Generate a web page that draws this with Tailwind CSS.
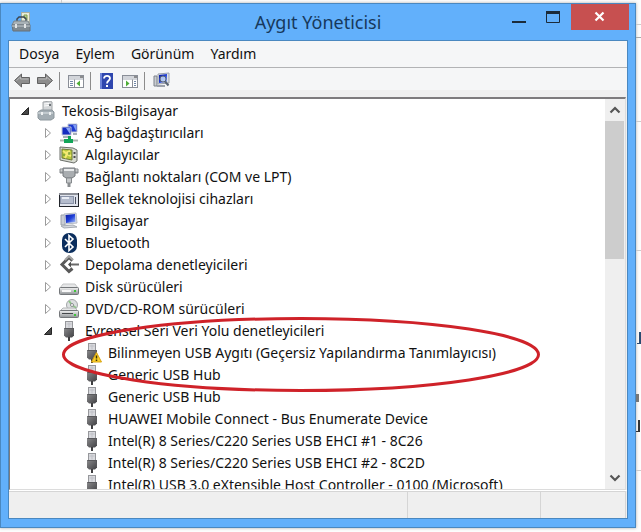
<!DOCTYPE html>
<html lang="tr">

<head>
    <meta charset="UTF-8">
    <meta name="viewport" content="width=device-width, initial-scale=1.0">
    <script src="https://cdn.jsdelivr.net/npm/@tailwindcss/browser@4"></script>
    <title>Aygıt Yöneticisi</title>
</head>

<body class="relative h-screen overflow-hidden flex flex-col bg-[#fdfdfd] pt-[3px] pr-[5px] pb-1 font-['Noto_Sans','Open_Sans',sans-serif] text-sm text-[#111]">

    <!-- Icons used more than once -->
    <svg class="absolute w-0 h-0">
        <defs>
            <linearGradient id="usb-body" x1="0" x2="1" y1="0" y2="1">
                <stop offset="0" stop-color="#8a8a8c"/>
                <stop offset="1" stop-color="#404043"/>
            </linearGradient>
            <linearGradient id="metal" x1="0" x2="0" y1="0" y2="1">
                <stop offset="0" stop-color="#f2f2f2"/>
                <stop offset="1" stop-color="#8f9396"/>
            </linearGradient>
            <linearGradient id="screen" x1="0" x2="1" y1="0" y2="1">
                <stop offset="0" stop-color="#0a1a9c"/>
                <stop offset="0.5" stop-color="#1f3fd8"/>
                <stop offset="1" stop-color="#a9c4fa"/>
            </linearGradient>
        </defs>
        <symbol id="usb" viewBox="0 0 20 20">
            <rect x="6.5" y="0.500" width="7" height="7" fill="#d9dade" stroke="#97989c"/>
            <path d="M7.500 3h5M10 1.500v5" stroke="#bfc0c6"/>
            <path d="M5 7h10v7.500l-2 2H7l-2-2z" fill="url(#usb-body)"/>
            <path d="M5.500 7.500h9v6.500" fill="none" stroke="#59595c"/>
            <rect x="9" y="16" width="2" height="4" fill="#3e3e40"/>
        </symbol>
        <symbol id="closed" viewBox="0 0 10 12">
            <path d="M2.500 1.500v9l5-4.500z" fill="#fff" stroke="#9b9b9b"/>
        </symbol>
        <symbol id="open" viewBox="0 0 10 12">
            <path d="M8.500 2.500v7h-7z" fill="#484848" stroke="#262626"/>
        </symbol>
    </svg>

    <!-- Page behind the window -->
    <div class="absolute top-0 left-[61px] w-px h-[3px] bg-[#ccc]"></div>
    <div class="absolute top-0 right-0 w-[5px] h-full overflow-hidden">
        <div class="absolute top-6 w-full h-px bg-[#ccc]"></div>
        <div class="absolute top-[37px] w-full h-px bg-[#aaa]"></div>
        <div class="absolute top-[121px] w-full h-px bg-[#ccc]"></div>
        <div class="absolute top-[250px] w-full h-px bg-[#ccc]"></div>
        <div class="absolute top-[332px] right-0 w-1 h-3 border-r-2 border-b border-[#2b4a70]"></div>
        <div class="absolute top-[394px] left-0 w-[3px] h-2 bg-[#777]"></div>
        <div class="absolute top-[420px] left-0 w-1 h-3 border-r-2 border-b border-[#333]"></div>
        <div class="absolute top-[470px] w-full h-px bg-[#ccc]"></div>
    </div>

    <main class="flex-1 min-h-0 flex flex-col bg-[#62b0fb] border border-[#4a88c0] shadow-[0_0_3px_#aaa]">

        <header class="relative h-9 shrink-0 flex items-center justify-center">
            <svg class="absolute left-2.5 top-2 w-5 h-5" viewBox="0 0 20 20">
                <rect x="10.500" y="0.500" width="8" height="11" fill="#e9ecd9" stroke="#a9aea0"/>
                <path d="M13 3h3v3h-3zM15 7h2" fill="#b9cf8e" stroke="#83a055"/>
                <path d="M6 10V7l2-2h5l2 2v3" fill="none" stroke="#3d4650" stroke-width="1.500"/>
                <path d="M3 9h14l2 4H1z" fill="#a9b2b7" stroke="#7a848a"/>
                <path d="M1 13h18v6H2z" fill="#7f8a91" stroke="#667178"/>
                <path d="M1 14h18" stroke="#c8ced2"/>
                <path d="M5 12v4M14 12v4" stroke="#e0e4e6" stroke-width="2"/>
            </svg>
            <h1 class="text-lg text-[#17395c]">Aygıt Yöneticisi</h1>
            <div class="absolute right-1.5 top-0 flex h-[26px]">
                <button class="w-10 flex justify-center" aria-label="Simge durumuna küçült">
                    <svg class="w-4 h-[26px]" viewBox="0 0 16 26"><path d="M1 18h14" stroke="#1b2b3a" stroke-width="2"/></svg>
                </button>
                <button class="w-7 flex justify-center" aria-label="Ekranı kapla">
                    <svg class="w-4 h-[26px]" viewBox="0 0 16 26"><path d="M1.500 8v10.500h13V8" fill="none" stroke="#1b2b3a"/><path d="M1 8.500h14" stroke="#1b2b3a" stroke-width="3"/></svg>
                </button>
                <button class="ml-1 w-[58px] flex justify-center bg-[#c75050]" aria-label="Kapat">
                    <svg class="w-3 h-[26px]" viewBox="0 0 12 26"><path d="M1.500 8.500l8 8M9.500 8.500l-8 8" stroke="#fff" stroke-width="2.200"/></svg>
                </button>
            </div>
        </header>

        <div class="flex-1 min-h-0 mx-[7px] mb-2 flex flex-col bg-[#efefef] border border-[#4a88c0]">

            <nav class="h-[27px] shrink-0 flex items-center gap-4 px-2.5 bg-[#f5f6f7] border-b border-[#b2b3b5]">
                <button>Dosya</button>
                <button>Eylem</button>
                <button>Görünüm</button>
                <button>Yardım</button>
            </nav>

            <div class="h-[22px] shrink-0 flex items-center pl-1 pt-1 bg-[#f5f6f7]">
                <button aria-label="Geri">
                    <svg class="w-[18px] h-[18px]" viewBox="0 0 18 18"><path d="M1.500 8.500l7-6.500v3.500h8v6h-8V15z" fill="#8d8d8d" stroke="#626262"/><path d="M3.500 8.500l4-3.500v2h8" fill="none" stroke="#b8b8b8"/></svg>
                </button>
                <button class="ml-[5px]" aria-label="İleri">
                    <svg class="w-[18px] h-[18px]" viewBox="0 0 18 18"><path d="M16.500 8.500l-7-6.500v3.500h-8v6h8V15z" fill="#8d8d8d" stroke="#626262"/><path d="M14.500 8.500l-4-3.500v2h-8" fill="none" stroke="#b8b8b8"/></svg>
                </button>
                <div class="ml-[5px] w-px h-[18px] bg-[#8c8c8c]"></div>
                <button class="ml-2" aria-label="Konsol ağacını göster">
                    <svg class="w-4 h-4" viewBox="0 0 16 16">
                        <rect x="0.500" y="2.500" width="15" height="12" fill="#fff" stroke="#8a8f98"/>
                        <path d="M1 4h14M1 6h14" stroke="#a5abb5"/>
                        <path d="M12 4h3" stroke="#444"/>
                        <path d="M6.500 6.500v8" stroke="#8a8f98"/>
                        <path d="M2 8.500h3M2 10.500h3M2 12.500h3" stroke="#7188a8"/>
                        <path d="M12 7.500v6L8.500 10.500z" fill="#4fae38"/>
                    </svg>
                </button>
                <div class="ml-1.5 w-px h-[18px] bg-[#8c8c8c]"></div>
                <button class="ml-[9px]" aria-label="Yardım">
                    <svg class="w-[13px] h-4" viewBox="0 0 13 16">
                        <rect width="13" height="16" fill="#2e46ae"/>
                        <path d="M1 0v16" stroke="#6d83d8" stroke-width="2"/>
                        <path d="M4 5.500C4 2 10 2 10 5.500C10 7.500 7 7.500 7 10.500" fill="none" stroke="#fff" stroke-width="1.800"/>
                        <rect x="6" y="12" width="2" height="2" fill="#fff"/>
                    </svg>
                </button>
                <button class="ml-[9px]" aria-label="Eylem bölmesini göster">
                    <svg class="w-4 h-4" viewBox="0 0 16 16">
                        <rect x="0.500" y="2.500" width="15" height="12" fill="#fff" stroke="#8a8f98"/>
                        <path d="M1 4h14M1 6h14" stroke="#a5abb5"/>
                        <path d="M12 4h3" stroke="#444"/>
                        <path d="M10.500 6.500v8" stroke="#8a8f98"/>
                        <path d="M12 8.500h2M12 10.500h2M12 12.500h2" stroke="#7188a8"/>
                        <path d="M4 7.500v6l3.500-3z" fill="#4fae38"/>
                    </svg>
                </button>
                <div class="ml-1.5 w-px h-[18px] bg-[#8c8c8c]"></div>
                <button class="ml-2" aria-label="Donanım değişikliklerini tara">
                    <svg class="w-[17px] h-[18px]" viewBox="0 0 17 18">
                        <path d="M1 4h3v10H1z" fill="#c9cdd2" stroke="#7c828a"/>
                        <path d="M5 2l11-1v10l-11 1z" fill="#dfe3ea" stroke="#9ba1ab"/>
                        <path d="M6 3l8-1v8l-8 1z" fill="url(#screen)"/>
                        <circle cx="10" cy="7" r="3" fill="#cfe4fb" fill-opacity="0.800" stroke="#5b6675"/>
                        <path d="M12 9.500l3.500 4" stroke="#5b6675" stroke-width="2"/>
                        <path d="M4 14h8" stroke="#9ba1ab" stroke-width="2"/>
                    </svg>
                </button>
            </div>

            <div class="flex-1 min-h-0 mt-[7px] mr-px flex bg-white border-t-2 border-l border-t-[#7d7b7d] border-l-[#7d7b7d] border-b border-b-[#dcdcdc] border-r border-r-[#dcdcdc]">

                <div class="relative flex-1 min-w-0 overflow-hidden">
                    <ul class="pt-px leading-[22px] whitespace-nowrap">
                        <li>
                            <div class="flex items-center pl-2.5">
                                <button class="w-4" aria-label="Daralt"><svg class="w-2.5 h-3"><use href="#open"/></svg></button>
                                <svg class="w-5 h-5 mr-1.5" viewBox="0 0 20 20">
                                    <path d="M7 1l7-1 2 1v11H7z" fill="#d3d6d8" stroke="#a2a6a9"/>
                                    <path d="M8 3l5-.5M8 5l5-.5" stroke="#fff"/>
                                    <rect x="13" y="3" width="2" height="2" fill="#6f757a"/>
                                    <path d="M2 11l3-2h11l2 2v6l-3 2H4l-2-2z" fill="#a3adb3" stroke="#8d979d"/>
                                    <path d="M2 12h15" stroke="#dfe5e8"/>
                                    <path d="M6 11v3M14 11v3" stroke="#eef1f2" stroke-width="2"/>
                                </svg>
                                <span>Tekosis-Bilgisayar</span>
                            </div>
                            <ul>
                                <li class="flex items-center pl-[33px]">
                                    <button class="w-4" aria-label="Genişlet"><svg class="w-2.5 h-3"><use href="#closed"/></svg></button>
                                    <svg class="w-5 h-5 mr-1.5" viewBox="0 0 20 20">
                                        <path d="M9 1h9v8H9z" fill="#1f3bd0" stroke="#bfc6d4"/>
                                        <path d="M14 2h3v6z" fill="#7f9df5"/>
                                        <path d="M3 4h9v8H3z" fill="#142cc0" stroke="#c4cbd8"/>
                                        <path d="M7 5h4v6z" fill="#8aa6f7"/>
                                        <path d="M4 14h7M14 11h4" stroke="#a8aeb8" stroke-width="2"/>
                                        <path d="M1 17.500h18" stroke="#aab4ae" stroke-width="2"/>
                                        <path d="M9 13h3v3h2v4H5v-4h4z" fill="#12a558"/>
                                    </svg>
                                    <span>Ağ bağdaştırıcıları</span>
                                </li>
                                <li class="flex items-center pl-[33px]">
                                    <button class="w-4" aria-label="Genişlet"><svg class="w-2.5 h-3"><use href="#closed"/></svg></button>
                                    <svg class="w-5 h-5 mr-1.5" viewBox="0 0 20 20">
                                        <path d="M1 2l13 1 4 2v11l-3 2-14-3z" fill="#d8dbd2" stroke="#6c706a"/>
                                        <path d="M3 4l10 1v10L3 13z" fill="#b8c93d" stroke="#6e7a3a"/>
                                        <path d="M4 6l3 2 4-2M6 13l2-4 4 2" fill="none" stroke="#f5ea74" stroke-width="2"/>
                                        <path d="M4 10h2M10 7v3" stroke="#57883a"/>
                                        <path d="M15.500 7v2M15.500 11v2" stroke="#4d4d4d" stroke-width="2"/>
                                    </svg>
                                    <span>Algılayıcılar</span>
                                </li>
                                <li class="flex items-center pl-[33px]">
                                    <button class="w-4" aria-label="Genişlet"><svg class="w-2.5 h-3"><use href="#closed"/></svg></button>
                                    <svg class="w-5 h-5 mr-1.5" viewBox="0 0 20 20">
                                        <path d="M1 2h18v4H1z" fill="url(#metal)" stroke="#85898c"/>
                                        <path d="M4 1h12v8l-3 2H7l-3-2z" fill="#a9adb0" stroke="#777b7e"/>
                                        <path d="M5 3h10" stroke="#e8eaeb" stroke-width="2"/>
                                        <path d="M7.500 11h5v5h-5z" fill="#c5c8ca" stroke="#85898c"/>
                                        <path d="M10 16v4" stroke="#8a8e91" stroke-width="3"/>
                                    </svg>
                                    <span>Bağlantı noktaları (COM ve LPT)</span>
                                </li>
                                <li class="flex items-center pl-[33px]">
                                    <button class="w-4" aria-label="Genişlet"><svg class="w-2.5 h-3"><use href="#closed"/></svg></button>
                                    <svg class="w-5 h-5 mr-1.5" viewBox="0 0 20 20">
                                        <rect x="0.500" y="4.500" width="19" height="13" fill="#dfe3ec" stroke="#22252b"/>
                                        <path d="M0 5h19" stroke="#8d9098" stroke-width="2"/>
                                        <rect x="1.500" y="7.500" width="13" height="7" fill="#b4bccd" stroke="#8a93a8"/>
                                        <path d="M3 9h7" stroke="#e9edf5" stroke-width="2"/>
                                        <path d="M16.500 8v7" stroke="#4a5060"/>
                                    </svg>
                                    <span>Bellek teknolojisi cihazları</span>
                                </li>
                                <li class="flex items-center pl-[33px]">
                                    <button class="w-4" aria-label="Genişlet"><svg class="w-2.5 h-3"><use href="#closed"/></svg></button>
                                    <svg class="w-5 h-5 mr-1.5" viewBox="0 0 20 20">
                                        <path d="M2 4h4v10H2z" fill="#c9cdd4" stroke="#9aa0a8"/>
                                        <path d="M5 3l12-1 1 10-12 1z" fill="#dfe3ea" stroke="#b3b9c4"/>
                                        <path d="M6.500 4l9.500-1 .5 8-9.500 1z" fill="url(#screen)"/>
                                        <path d="M2 15l12-1 4 2-13 1z" fill="#d5d9df" stroke="#a5abb3"/>
                                    </svg>
                                    <span>Bilgisayar</span>
                                </li>
                                <li class="flex items-center pl-[33px]">
                                    <button class="w-4" aria-label="Genişlet"><svg class="w-2.5 h-3"><use href="#closed"/></svg></button>
                                    <svg class="w-5 h-5 mr-1.5" viewBox="0 0 20 20">
                                        <rect x="3" y="0" width="15" height="20" rx="7" fill="#0b2e5e"/>
                                        <path d="M6 6l8 8-4 3.500V2.500L14 6l-8 8" fill="none" stroke="#fff" stroke-width="1.600"/>
                                    </svg>
                                    <span>Bluetooth</span>
                                </li>
                                <li class="flex items-center pl-[33px]">
                                    <button class="w-4" aria-label="Genişlet"><svg class="w-2.5 h-3"><use href="#closed"/></svg></button>
                                    <svg class="w-5 h-5 mr-1.5" viewBox="0 0 20 20">
                                        <path d="M13.500 5.500L10 2.500 3 9.500l7 7 3.500-3" fill="none" stroke="#595959" stroke-width="3"/>
                                        <path d="M6 5l4-4 4 4" fill="none" stroke="#a5a5a5" stroke-width="2"/>
                                        <path d="M10 9.500h10" stroke="#696969" stroke-width="2"/>
                                        <path d="M9 9.500l3-3v6z" fill="#4d4d4d"/>
                                    </svg>
                                    <span>Depolama denetleyicileri</span>
                                </li>
                                <li class="flex items-center pl-[33px]">
                                    <button class="w-4" aria-label="Genişlet"><svg class="w-2.5 h-3"><use href="#closed"/></svg></button>
                                    <svg class="w-5 h-5 mr-1.5" viewBox="0 0 20 20">
                                        <path d="M4 7h12l3 4H1z" fill="#e6e7e8" stroke="#c3c5c6"/>
                                        <rect x="0.500" y="10.500" width="19" height="7" rx="1" fill="url(#metal)" stroke="#74777a"/>
                                        <path d="M3 14h9" stroke="#f7f7f7" stroke-width="2"/>
                                        <rect x="15" y="13" width="2" height="2" fill="#3fc43a"/>
                                    </svg>
                                    <span>Disk sürücüleri</span>
                                </li>
                                <li class="flex items-center pl-[33px]">
                                    <button class="w-4" aria-label="Genişlet"><svg class="w-2.5 h-3"><use href="#closed"/></svg></button>
                                    <svg class="w-5 h-5 mr-1.5" viewBox="0 0 20 20">
                                        <circle cx="13" cy="6" r="5.500" fill="#dcdfe0" stroke="#a3a6a8"/>
                                        <path d="M13 6l-3-4M13 6l4 3" stroke="#8fc48a" stroke-width="2"/>
                                        <circle cx="13" cy="6" r="1.500" fill="#fff" stroke="#8b8e90"/>
                                        <path d="M4 9h12l3 3H1z" fill="#e6e7e8" stroke="#b5b7b8"/>
                                        <rect x="0.500" y="11.500" width="19" height="7" rx="1" fill="url(#metal)" stroke="#74777a"/>
                                        <path d="M3 14.500h11" stroke="#44474a"/>
                                        <rect x="15" y="15" width="2" height="2" fill="#3fc43a"/>
                                    </svg>
                                    <span>DVD/CD-ROM sürücüleri</span>
                                </li>
                                <li>
                                    <div class="flex items-center pl-[33px]">
                                        <button class="w-4" aria-label="Daralt"><svg class="w-2.5 h-3"><use href="#open"/></svg></button>
                                        <svg class="w-5 h-5 mr-1.5"><use href="#usb"/></svg>
                                        <span>Evrensel Seri Veri Yolu denetleyicileri</span>
                                    </div>
                                    <ul>
                                        <li class="flex items-center pl-[72px]">
                                            <svg class="w-5 h-5 mr-1.5" viewBox="0 0 20 20">
                                                <use href="#usb" width="20" height="20"/>
                                                <path d="M14.500 9.500l5 9.500h-10z" fill="#f8cf2a" stroke="#d8a310"/>
                                                <path d="M14.500 12.500v3M14.500 16.500v1.500" stroke="#3b3200" stroke-width="1.500"/>
                                            </svg>
                                            <span>Bilinmeyen USB Aygıtı (Geçersiz Yapılandırma Tanımlayıcısı)</span>
                                        </li>
                                        <li class="flex items-center pl-[72px]">
                                            <svg class="w-5 h-5 mr-1.5"><use href="#usb"/></svg>
                                            <span>Generic USB Hub</span>
                                        </li>
                                        <li class="flex items-center pl-[72px]">
                                            <svg class="w-5 h-5 mr-1.5"><use href="#usb"/></svg>
                                            <span>Generic USB Hub</span>
                                        </li>
                                        <li class="flex items-center pl-[72px]">
                                            <svg class="w-5 h-5 mr-1.5"><use href="#usb"/></svg>
                                            <span>HUAWEI Mobile Connect - Bus Enumerate Device</span>
                                        </li>
                                        <li class="flex items-center pl-[72px]">
                                            <svg class="w-5 h-5 mr-1.5"><use href="#usb"/></svg>
                                            <span>Intel(R) 8 Series/C220 Series USB EHCI #1 - 8C26</span>
                                        </li>
                                        <li class="flex items-center pl-[72px]">
                                            <svg class="w-5 h-5 mr-1.5"><use href="#usb"/></svg>
                                            <span>Intel(R) 8 Series/C220 Series USB EHCI #2 - 8C2D</span>
                                        </li>
                                        <li class="flex items-center pl-[72px]">
                                            <svg class="w-5 h-5 mr-1.5"><use href="#usb"/></svg>
                                            <span>Intel(R) USB 3.0 eXtensible Host Controller - 0100 (Microsoft)</span>
                                        </li>
                                    </ul>
                                </li>
                            </ul>
                        </li>
                    </ul>

                    <!-- Red ring round the faulty device -->
                    <svg class="absolute left-[51px] top-[216px] w-[480px] h-20" viewBox="0 0 480 80">
                        <ellipse cx="240" cy="39.500" rx="237.500" ry="36" fill="none" stroke="#cf2229" stroke-width="3"/>
                    </svg>
                </div>

                <div class="w-5 shrink-0 flex flex-col bg-[#efefef]">
                    <button class="h-[22px] flex items-center justify-center" aria-label="Yukarı kaydır">
                        <svg class="w-3 h-2" viewBox="0 0 12 8"><path d="M1.500 6.500L6 2l4.500 4.500" fill="none" stroke="#555" stroke-width="2.200"/></svg>
                    </button>
                    <div class="flex-1">
                        <div class="h-[40%] mr-px bg-[#cdcdcd]"></div>
                    </div>
                    <button class="h-[22px] flex items-center justify-center" aria-label="Aşağı kaydır">
                        <svg class="w-3 h-2" viewBox="0 0 12 8"><path d="M1.500 1.500L6 6l4.500-4.500" fill="none" stroke="#555" stroke-width="2.200"/></svg>
                    </button>
                </div>
            </div>

            <footer class="h-7 shrink-0 flex justify-end border-t border-white pr-px">
                <div class="flex-1 border-t border-r border-[#d5d5d5]"></div>
                <div class="w-[133px] border-t border-r border-[#d5d5d5]"></div>
                <div class="w-[85px] border-t border-r border-[#d5d5d5]"></div>
            </footer>
        </div>
    </main>

</body>

</html>
